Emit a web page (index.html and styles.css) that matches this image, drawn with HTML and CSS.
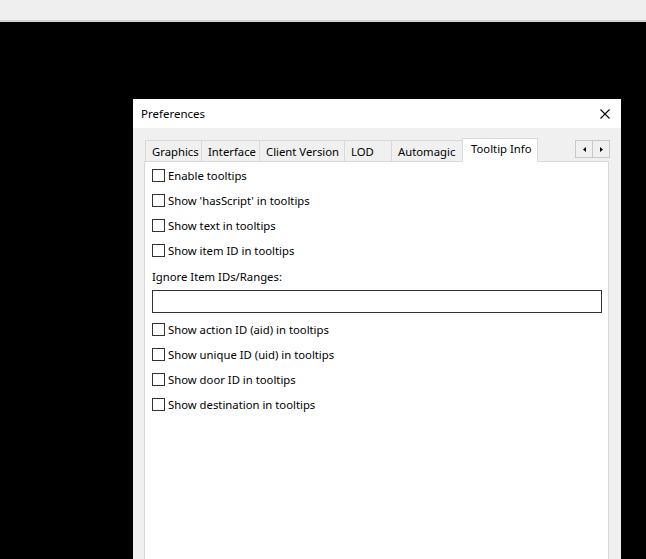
FILE: index.html
```html
<!DOCTYPE html>
<html>
<head>
<meta charset="utf-8">
<title>Preferences</title>
<link rel="stylesheet" href="styles.css">
</head>
<body>
<div class="topbar"></div>
<div class="dialog">
  <div class="titlebar">
    <span class="title">Preferences</span>
    <span class="close">
      <svg width="10" height="10" viewBox="0 0 10 10"><path d="M0.5 0.5 L9.5 9.5 M9.5 0.5 L0.5 9.5" stroke="#000" stroke-width="1.1" fill="none"/></svg>
    </span>
  </div>
  <div class="body">
    <div class="tabrow">
      <div class="tab t-graphics">Graphics</div>
      <div class="tab t-interface">Interface</div>
      <div class="tab t-client">Client Version</div>
      <div class="tab t-lod">LOD</div>
      <div class="tab t-auto">Automagic</div>
      <div class="tab active t-tooltip">Tooltip Info</div>
      <div class="scroller">
        <div class="sbtn"><svg width="3" height="5" viewBox="0 0 3 5"><path d="M3 0 L0 2.5 L3 5 Z" fill="#000"/></svg></div>
        <div class="sbtn"><svg width="3" height="5" viewBox="0 0 3 5"><path d="M0 0 L3 2.5 L0 5 Z" fill="#000"/></svg></div>
      </div>
    </div>
    <div class="panel">
      <label class="check"><span class="box"></span>Enable tooltips</label>
      <label class="check"><span class="box"></span>Show 'hasScript' in tooltips</label>
      <label class="check"><span class="box"></span>Show text in tooltips</label>
      <label class="check"><span class="box"></span>Show item ID in tooltips</label>
      <div class="fieldlabel">Ignore Item IDs/Ranges:</div>
      <div class="textinput"></div>
      <label class="check"><span class="box"></span>Show action ID (aid) in tooltips</label>
      <label class="check"><span class="box"></span>Show unique ID (uid) in tooltips</label>
      <label class="check"><span class="box"></span>Show door ID in tooltips</label>
      <label class="check"><span class="box"></span>Show destination in tooltips</label>
    </div>
  </div>
</div>
</body>
</html>
```
FILE: styles.css
```css
html, body {
  margin: 0;
  padding: 0;
  height: 100%;
  overflow: hidden;
}
body {
  background: #000;
  font-family: "Noto Sans", "Open Sans", sans-serif;
  font-size: 11.3px;
  color: #000;
}
.topbar {
  height: 20px;
  background: #efefef;
  border-bottom: 2px solid #d2d2d2;
}
.dialog {
  margin-top: 77px;
  margin-left: 133px;
  width: 488px;
  height: 480px;
  background: #f0f0f0;
  display: flex;
  flex-direction: column;
}
.titlebar {
  height: 29px;
  background: #fff;
  display: flex;
  align-items: center;
  padding-left: 8px;
  padding-right: 11px;
}
.title {
  flex: 1;
  font-size: 11.5px;
}
.close {
  display: flex;
  width: 10px;
  height: 10px;
}
.body {
  flex: 1;
  display: flex;
  flex-direction: column;
  padding: 10px 12px 0 11px;
}
.tabrow {
  display: flex;
  align-items: flex-end;
  height: 23px;
  padding-left: 1px;
  position: relative;
  z-index: 1;
}
.tab {
  box-sizing: border-box;
  height: 21px;
  border: 1px solid #d9d9d9;
  border-left: none;
  border-bottom: none;
  padding: 1px 0 0 6px;
  line-height: 19px;
  white-space: nowrap;
  background: #f0f0f0;
}
.t-graphics { border-left: 1px solid #d9d9d9; width: 57px; }
.t-interface { width: 58px; }
.t-client { width: 85px; }
.t-lod { width: 47px; }
.t-auto { width: 71px; }
.tab.active {
  background: #fff;
  height: 24px;
  width: 76px;
  margin-left: -1px;
  border-left: 1px solid #d9d9d9;
  margin-bottom: -1px;
  line-height: 20px;
  padding: 0 0 0 8px;
}
.scroller {
  margin-left: auto;
  align-self: flex-start;
  margin-top: 2px;
  margin-right: -1px;
  display: flex;
}
.sbtn {
  box-sizing: border-box;
  width: 18px;
  height: 18px;
  border: 1px solid #c8c8c8;
  background: #f0f0f0;
  display: flex;
  align-items: center;
  justify-content: center;
}
.sbtn + .sbtn { margin-left: -1px; }
.panel {
  flex: 1;
  background: #fff;
  border: 1px solid #d9d9d9;
  padding: 7px 6px 0 7px;
  display: flex;
  flex-direction: column;
}
.check {
  display: flex;
  align-items: center;
  height: 13px;
  margin-bottom: 12px;
  white-space: nowrap;
}
.box {
  box-sizing: border-box;
  width: 13px;
  height: 13px;
  border: 1px solid #333;
  background: #fff;
  margin-right: 3px;
  flex: none;
}
.fieldlabel {
  height: 14px;
  line-height: 14px;
  margin-top: 1px;
  margin-bottom: 6px;
}
.textinput {
  box-sizing: border-box;
  height: 23px;
  border: 1px solid #333;
  background: #fff;
  margin-bottom: 10px;
}
```
